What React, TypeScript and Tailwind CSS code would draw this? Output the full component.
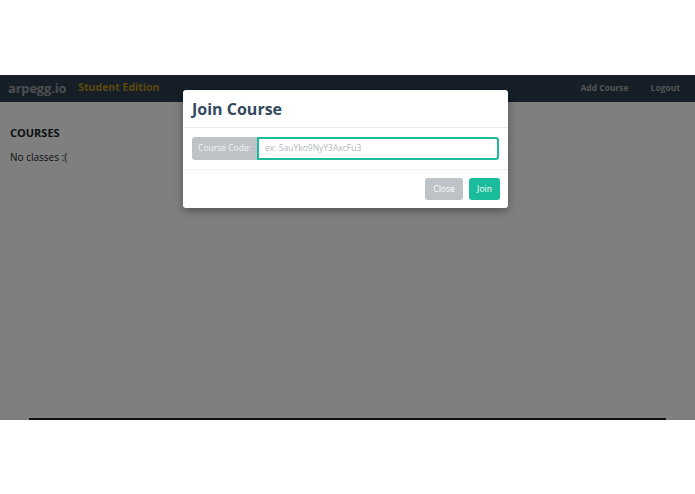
import React from 'react';

const font = { fontFamily: '"Open Sans", "Liberation Sans", sans-serif' };

export default function App() {
  return (
    <div className="w-[695px] h-[494px] bg-white overflow-hidden" style={font}>
      <div className="h-[75px]" />

      {/* 页面截图区域 */}
      <div className="relative h-[345px] bg-white">
        <nav className="h-[27px] bg-[#2c3e50] flex items-center px-2">
          <span className="text-[13px] font-bold text-[#999da1] tracking-[-0.2px]">arpegg.io</span>
          <span className="ml-[12px] text-[10.5px] font-bold text-[#b8901a] -mt-[1px]">Student Edition</span>
          <div className="ml-auto flex items-center gap-[22px] pr-[7px] text-[8.5px] font-bold text-[#a6a9ac]">
            <span>Add Course</span>
            <span>Logout</span>
          </div>
        </nav>

        <main className="px-[10px] pt-[23px]">
          <h2 className="text-[11px] font-bold text-[#161f28]">COURSES</h2>
          <p className="mt-[8px] text-[10px] text-[#1a1a1a]">No classes :(</p>
        </main>

        <div className="absolute left-[29px] right-[29px] bottom-[0px] h-[2px] bg-[#222]" />

        {/* 遮罩层 */}
        <div className="absolute inset-0 bg-black/50" />

        {/* 弹窗 */}
        <div className="absolute left-[183px] top-[15px] w-[325px] bg-white rounded-[3px] shadow-[0_3px_8px_rgba(0,0,0,0.35)]">
          <div className="h-[38px] px-[9px] flex items-center border-b border-[#eeeeee]">
            <h1 className="text-[16px] font-bold text-[#34495e]">Join Course</h1>
          </div>
          <div className="px-[9px] py-[9px] border-b border-[#eeeeee]">
            <div className="flex h-[23px]">
              <div className="w-[65px] bg-[#bdc3c7] rounded-l-[3px] flex items-center justify-center text-[8.5px] text-[#f4f5f6]">
                Course Code:
              </div>
              <div className="flex-1 border-2 border-[#1abc9c] rounded-r-[3px] flex items-center px-[6px] text-[8.5px] text-[#b3b8bb]">
                ex: 5auYko9NyY3AxcFu3
              </div>
            </div>
          </div>
          <div className="h-[38px] flex items-center justify-end gap-[6px] px-[8px]">
            <button className="h-[22px] w-[38px] bg-[#bdc3c7] rounded-[3px] text-[8.5px] text-white">Close</button>
            <button className="h-[22px] w-[31px] bg-[#1abc9c] rounded-[3px] text-[8.5px] text-white">Join</button>
          </div>
        </div>
      </div>
    </div>
  );
}
